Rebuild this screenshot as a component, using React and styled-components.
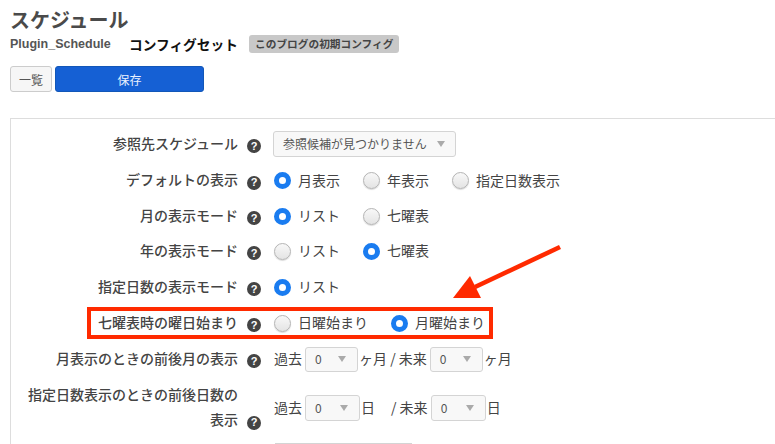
import React from 'react';
import styled, { createGlobalStyle } from 'styled-components';

const GlobalStyle = createGlobalStyle`
  html, body {
    margin: 0;
    padding: 0;
    background: #fff;
    overflow: hidden;
  }
  body {
    font-family: "Noto Sans CJK JP", "Liberation Sans", sans-serif;
    color: #444;
  }
`;

const Page = styled.div`
  width: 775px;
  height: 444px;
  overflow: hidden;
  padding: 8px 0 0 10px;
  box-sizing: border-box;
  position: relative;
`;

const Title = styled.h1`
  margin: 0;
  font-size: 20px;
  line-height: 24px;
  font-weight: 700;
  color: #4a4a4a;
`;

const SubRow = styled.div`
  display: flex;
  align-items: center;
  height: 24px;
`;

const PluginName = styled.span`
  font-family: "Liberation Sans", sans-serif;
  font-size: 12.5px;
  font-weight: 700;
  color: #555;
  width: 119px;
`;

const ConfigLabel = styled.span`
  font-size: 13.7px;
  font-weight: 700;
  color: #111;
  width: 120px;
`;

const Badge = styled.span`
  font-size: 10.7px;
  font-weight: 700;
  line-height: 18px;
  height: 18px;
  padding: 0 6px;
  background: #c8c8c8;
  color: #444;
  border-radius: 3px;
`;

const Toolbar = styled.div`
  display: flex;
  gap: 3px;
  margin-top: 10px;
`;

const Button = styled.button`
  height: 26px;
  width: ${(p) => p.$width}px;
  padding: 0;
  font-family: inherit;
  font-size: 12px;
  border-radius: 3px;
  border: 1px solid ${(p) => (p.$primary ? '#1257b8' : '#ccc')};
  background: ${(p) => (p.$primary ? '#1560d4' : '#f6f6f6')};
  color: ${(p) => (p.$primary ? '#e8f0ff' : '#555')};
`;

const Panel = styled.div`
  margin-top: 26px;
  width: 800px;
  height: 400px;
  box-sizing: border-box;
  border: 1px solid #ddd;
  border-right: 0;
  padding-top: 7px;
`;

const Row = styled.div`
  display: grid;
  grid-template-columns: 250px 1fr;
  align-items: center;
  height: ${(p) => p.$height || 36}px;
  position: relative;
`;

const Label = styled.div`
  font-size: 14px;
  font-weight: 500;
  line-height: 25px;
  color: #444;
  text-align: right;
  padding-bottom: 2px;
  white-space: nowrap;
`;

const LabelLine = styled.span`
  display: block;
  padding-right: 23px;
`;

const Help = styled.span`
  display: inline-flex;
  align-items: center;
  justify-content: center;
  width: 14px;
  height: 14px;
  margin-left: 9px;
  border-radius: 50%;
  background: #444;
  color: #fff;
  font-family: "Liberation Sans", sans-serif;
  font-size: 11px;
  font-weight: 700;
  line-height: 1;
  vertical-align: -1px;
`;

const Controls = styled.div`
  display: flex;
  align-items: center;
  padding: 0 0 2px 13px;
  font-size: 14px;
  line-height: 20px;
  color: #444;
  white-space: nowrap;
`;

const RadioItem = styled.label`
  display: inline-flex;
  align-items: center;
  width: ${(p) => p.$width}px;
`;

const RadioDot = styled.span`
  box-sizing: border-box;
  flex: none;
  width: 17px;
  height: 17px;
  margin: 2px 7px 0 0;
  border-radius: 50%;
  ${(p) =>
    p.$checked
      ? 'background: #fff; border: 5px solid #1a7cf0;'
      : 'background: linear-gradient(#f8f8f8, #e4e4e4); border: 1px solid #b4b4b4; box-shadow: 0 1px 1px rgba(0,0,0,.15);'}
`;

const Dropdown = styled.div`
  box-sizing: border-box;
  display: inline-flex;
  align-items: center;
  justify-content: space-between;
  height: ${(p) => p.$height || 25}px;
  width: ${(p) => p.$width}px;
  padding: 0 11px 0 9px;
  margin: 2px 1px 0 3px;
  background: #f8f8f8;
  border: 1px solid #d4d4d4;
  border-radius: 3px;
  font-size: 12px;
  color: #555;
  &::after {
    content: '';
    border: 4px solid transparent;
    border-top: 6px solid #aaa;
    border-bottom: 0;
  }
`;

const WideSelect = styled(Dropdown)`
  margin: 2px 0 0 -1px;
  padding: 0 10px 0 9px;
`;

const Spacer = styled.span`
  width: ${(p) => p.$width}px;
`;

const Highlight = styled.div`
  position: absolute;
  left: 76px;
  top: 2px;
  width: 406px;
  height: 32px;
  box-sizing: border-box;
  border: 4px solid #ff2a00;
  pointer-events: none;
`;

const Arrow = styled.svg`
  position: absolute;
  left: 450px;
  top: 240px;
`;

const PeekBox = styled.div`
  position: absolute;
  left: 275px;
  top: 443px;
  width: 135px;
  height: 10px;
  border: 1px solid #d4d4d4;
  background: #f8f8f8;
`;

const Q = () => <Help>?</Help>;

const Radio = ({ checked, width, children }) => (
  <RadioItem $width={width}>
    <RadioDot $checked={checked} />
    {children}
  </RadioItem>
);

export default function App() {
  return (
    <Page>
      <GlobalStyle />
      <Title>スケジュール</Title>
      <SubRow>
        <PluginName>Plugin_Schedule</PluginName>
        <ConfigLabel>コンフィグセット</ConfigLabel>
        <Badge>このブログの初期コンフィグ</Badge>
      </SubRow>
      <Toolbar>
        <Button $width={42}>一覧</Button>
        <Button $width={149} $primary>保存</Button>
      </Toolbar>
      <Panel>
        <Row>
          <Label>参照先スケジュール<Q /></Label>
          <Controls>
            <WideSelect $width={183} $height={26}>参照候補が見つかりません</WideSelect>
          </Controls>
        </Row>
        <Row $height={37}>
          <Label>デフォルトの表示<Q /></Label>
          <Controls>
            <Radio checked width={89}>月表示</Radio>
            <Radio width={89}>年表示</Radio>
            <Radio>指定日数表示</Radio>
          </Controls>
        </Row>
        <Row $height={34}>
          <Label>月の表示モード<Q /></Label>
          <Controls>
            <Radio checked width={89}>リスト</Radio>
            <Radio>七曜表</Radio>
          </Controls>
        </Row>
        <Row>
          <Label>年の表示モード<Q /></Label>
          <Controls>
            <Radio width={89}>リスト</Radio>
            <Radio checked>七曜表</Radio>
          </Controls>
        </Row>
        <Row>
          <Label>指定日数の表示モード<Q /></Label>
          <Controls>
            <Radio checked>リスト</Radio>
          </Controls>
        </Row>
        <Row>
          <Label>七曜表時の曜日始まり<Q /></Label>
          <Controls>
            <Radio width={117}>日曜始まり</Radio>
            <Radio checked>月曜始まり</Radio>
          </Controls>
          <Highlight />
        </Row>
        <Row>
          <Label>月表示のときの前後月の表示<Q /></Label>
          <Controls>
            過去<Dropdown $width={53}>0</Dropdown>ヶ月 / 未来<Dropdown $width={53}>0</Dropdown>ヶ月
          </Controls>
        </Row>
        <Row $height={62}>
          <Label>
            <LabelLine>指定日数表示のときの前後日数の</LabelLine>表示<Q />
          </Label>
          <Controls>
            過去<Dropdown $width={55} $height={26}>0</Dropdown>日<Spacer $width={16} />/ 未来<Dropdown $width={55} $height={26}>0</Dropdown>日
          </Controls>
        </Row>
      </Panel>
      <PeekBox />
      <Arrow width="120" height="70" viewBox="0 0 120 70">
        <path d="M110 7 L25 47" stroke="#ff2a00" strokeWidth="4.6" fill="none" />
        <path d="M3 58 L20 36 L31 58 Z" fill="#ff2a00" />
      </Arrow>
    </Page>
  );
}
